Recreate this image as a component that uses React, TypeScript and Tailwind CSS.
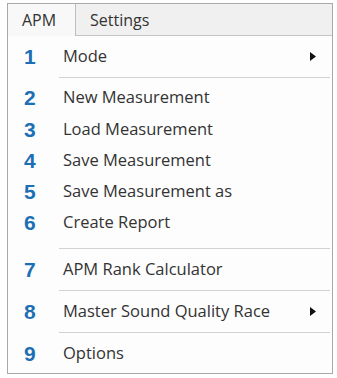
import { ReactNode } from "react";

const blue = "text-[#1d6fb4]";

function Num({ n }: { n: number }) {
  return (
    <span
      className={`w-[50px] pl-[16px] text-[21px] font-bold leading-none ${blue}`}
      style={{ fontFamily: '"Liberation Sans", Arial, sans-serif' }}
    >
      {n}
    </span>
  );
}

function Arrow() {
  return (
    <svg width="6" height="9" viewBox="0 0 6 9" className="mr-[16px]">
      <path d="M0 0 L6 4.5 L0 9 Z" fill="#111" />
    </svg>
  );
}

function Row({
  n,
  label,
  h,
  sub,
}: {
  n: number;
  label: string;
  h: string;
  sub?: boolean;
}) {
  return (
    <div className={`flex items-center ${h}`}>
      <Num n={n} />
      <span className="ml-[5px] flex-1 text-[16.5px] text-[#333]">{label}</span>
      {sub && <Arrow />}
    </div>
  );
}

function Sep(): ReactNode {
  return <div className="ml-[51px] mr-[2px] h-px bg-[#d2d2d2]" />;
}

export default function App() {
  return (
    <div
      className="h-[378px] w-[337px] bg-white pl-[7px] pt-[3px]"
      style={{ fontFamily: '"Open Sans", "Noto Sans", sans-serif' }}
    >
      <div className="flex h-[371px] w-[326px] flex-col border border-[#a9a9a9] bg-[#fdfdfd]">
        <div className="flex h-[32px] shrink-0 bg-[#f0f0f0]">
          <div className="flex w-[68px] items-center border-r border-[#bdbdbd] bg-[#f8f8f8] pl-[14px] text-[16px] text-[#333]">
            APM
          </div>
          <div className="flex flex-1 items-center border-b border-[#c4c4c4] pl-[14px] text-[16px] text-[#333]">
            Settings
          </div>
        </div>
        <Row n={1} label="Mode" h="h-[41px]" sub />
        <Sep />
        <div className="pt-[3px] pb-[10px]">
          <Row n={2} label="New Measurement" h="h-[33px]" />
          <Row n={3} label="Load Measurement" h="h-[31px]" />
          <Row n={4} label="Save Measurement" h="h-[31px]" />
          <Row n={5} label="Save Measurement as" h="h-[31px]" />
          <Row n={6} label="Create Report" h="h-[31px]" />
        </div>
        <Sep />
        <Row n={7} label="APM Rank Calculator" h="h-[41px]" />
        <Sep />
        <Row n={8} label="Master Sound Quality Race" h="h-[41px]" sub />
        <Sep />
        <Row n={9} label="Options" h="flex-1" />
      </div>
    </div>
  );
}
